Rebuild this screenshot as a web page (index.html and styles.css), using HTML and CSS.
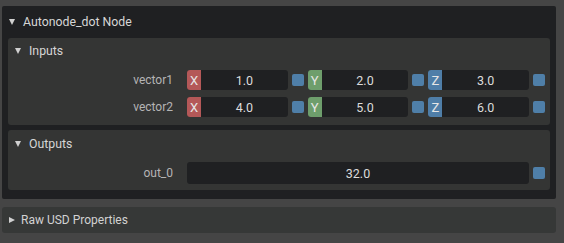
FILE: index.html
```html
<!DOCTYPE html>
<html>
<head>
<meta charset="utf-8">
<link rel="stylesheet" href="styles.css">
</head>
<body>
<div class="page">
  <div class="frame">
    <div class="frame-head"><span class="tri down"></span><span class="head-text">Autonode_dot Node</span></div>
    <div class="panel inputs">
      <div class="panel-head"><span class="tri down"></span><span>Inputs</span></div>
      <div class="row">
        <div class="label">vector1</div>
        <div class="fields">
          <div class="group"><span class="axis x">X</span><span class="val">1.0</span></div><span class="sq"></span>
          <div class="group"><span class="axis y">Y</span><span class="val">2.0</span></div><span class="sq"></span>
          <div class="group"><span class="axis z">Z</span><span class="val">3.0</span></div><span class="sq"></span>
        </div>
      </div>
      <div class="row">
        <div class="label">vector2</div>
        <div class="fields">
          <div class="group"><span class="axis x">X</span><span class="val">4.0</span></div><span class="sq"></span>
          <div class="group"><span class="axis y">Y</span><span class="val">5.0</span></div><span class="sq"></span>
          <div class="group"><span class="axis z">Z</span><span class="val">6.0</span></div><span class="sq"></span>
        </div>
      </div>
    </div>
    <div class="panel outputs">
      <div class="panel-head"><span class="tri down"></span><span>Outputs</span></div>
      <div class="row out">
        <div class="label">out_0</div>
        <div class="fields">
          <div class="group single"><span class="val">32.0</span></div><span class="sq"></span>
        </div>
      </div>
    </div>
  </div>
  <div class="raw"><span class="tri right"></span><span>Raw USD Properties</span></div>
</div>
</body>
</html>
```
FILE: styles.css
```css
html, body {
  margin: 0;
  padding: 0;
  background: #454545;
  width: 564px;
  height: 243px;
  overflow: hidden;
  font-family: Roboto, "Noto Sans", "Liberation Sans", sans-serif;
}
.page {
  padding: 6px 0 0 2px;
}
.frame {
  width: 554px;
  height: 193px;
  box-sizing: border-box;
  background: #1f2022;
  border-radius: 2px;
  padding: 0 6px;
  display: flex;
  flex-direction: column;
}
.frame-head {
  height: 32px;
  display: flex;
  align-items: center;
  color: #d6d6d6;
  font-size: 12.3px;
}
.tri {
  display: inline-block;
  width: 0;
  height: 0;
}
.tri.down {
  border-left: 3.5px solid transparent;
  border-right: 3.5px solid transparent;
  border-top: 6px solid #d0d0d0;
}
.tri.right {
  border-top: 3.5px solid transparent;
  border-bottom: 3.5px solid transparent;
  border-left: 6px solid #d0d0d0;
}
.frame-head .tri {
  margin-left: 1px;
  margin-right: 8px;
}
.panel {
  background: #343534;
  border-radius: 3px;
  display: flex;
  flex-direction: column;
}
.inputs {
  height: 87px;
}
.outputs {
  margin-top: 5px;
  height: 60px;
}
.panel-head {
  height: 26px;
  display: flex;
  align-items: center;
  color: #d6d6d6;
  font-size: 12.3px;
  padding-left: 7px;
}
.outputs .panel-head {
  height: 28px;
}
.panel-head .tri {
  margin-right: 8px;
}
.row {
  display: flex;
  align-items: center;
  height: 20px;
  margin-top: 6px;
}
.row + .row {
  margin-top: 7px;
}
.row.out {
  height: 22px;
  margin-top: 4px;
}
.label {
  width: 179px;
  text-align: right;
  padding-right: 14px;
  box-sizing: border-box;
  color: #b4b4b4;
  font-size: 12px;
  flex: none;
}
.fields {
  display: flex;
  align-items: center;
  gap: 4px;
  flex: 1;
  padding-right: 5px;
}
.group {
  flex: 1;
  display: flex;
  height: 20px;
  background: #1f2022;
  border-radius: 3px;
  overflow: hidden;
}
.out .group {
  height: 22px;
}
.axis {
  width: 14px;
  flex: none;
  display: flex;
  align-items: center;
  justify-content: center;
  color: #e6e6e6;
  font-size: 13px;
}
.axis.x { background: #b45858; }
.axis.y { background: #6e9e6c; }
.axis.z { background: #4f7ea8; }
.val {
  flex: 1;
  display: flex;
  align-items: center;
  justify-content: center;
  color: #dcdcdc;
  font-size: 12.5px;
}
.sq {
  width: 12px;
  height: 12px;
  flex: none;
  border-radius: 2px;
  background: #4f7fa8;
}
.raw {
  margin-top: 8px;
  width: 554px;
  height: 26px;
  box-sizing: border-box;
  background: #363837;
  border-radius: 3px;
  display: flex;
  align-items: center;
  padding-left: 7px;
  color: #d2d2d2;
  font-size: 12px;
}
.raw .tri {
  margin-right: 6px;
}
```
